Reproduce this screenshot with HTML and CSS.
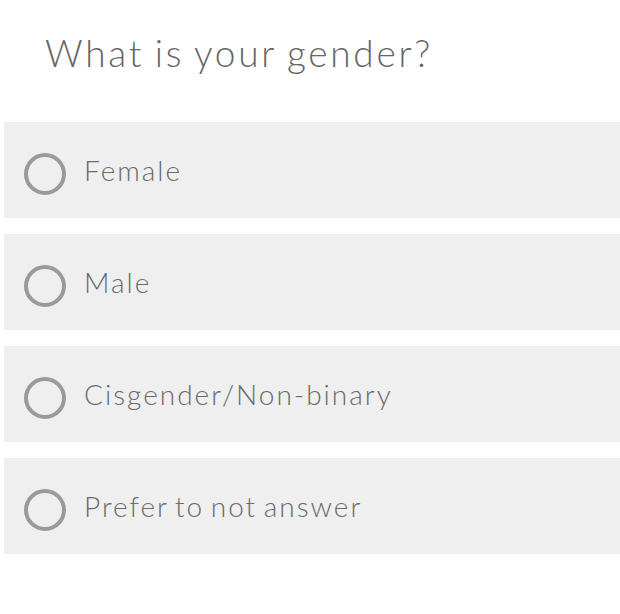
FILE: index.html
```html
<!DOCTYPE html>
<html>
<head>
<meta charset="utf-8">
<link rel="stylesheet" href="styles.css">
</head>
<body>
<div class="question">
  <h1 class="title">What is your gender?</h1>
  <div class="options">
    <label class="option"><span class="radio"></span><span class="label">Female</span></label>
    <label class="option"><span class="radio"></span><span class="label">Male</span></label>
    <label class="option"><span class="radio"></span><span class="label">Cisgender/Non-binary</span></label>
    <label class="option"><span class="radio"></span><span class="label">Prefer to not answer</span></label>
  </div>
</div>
</body>
</html>
```
FILE: styles.css
```css
html, body { margin: 0; padding: 0; background: #fff; }
body { font-family: "Lato", "Open Sans", sans-serif; width: 620px; }
.question { padding-top: 30px; }
.title {
  margin: 0 0 0 45px;
  font-size: 37px;
  font-weight: 300;
  line-height: 46px;
  color: #666;
  letter-spacing: 2.7px;
  word-spacing: -2px;
}
.options {
  margin: 46px 0 0 4px;
  display: flex;
  flex-direction: column;
  gap: 16px;
}
.option {
  height: 96px;
  background: #efefef;
  display: flex;
  align-items: center;
  padding-left: 20px;
  gap: 18px;
}
.radio {
  width: 34px;
  height: 34px;
  border: 4px solid #9a9a9a;
  border-radius: 50%;
  margin-top: 8px;
  flex: none;
}
.label {
  font-size: 28px;
  font-weight: 300;
  color: #6a6a6a;
  letter-spacing: 2px;
  word-spacing: -3px;
}
```
